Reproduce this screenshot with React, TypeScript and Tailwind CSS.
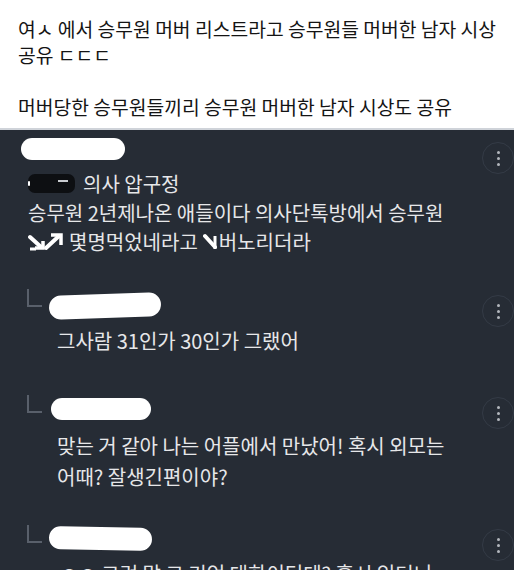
import React from "react";

const font = { fontFamily: '"Noto Sans CJK KR", "Noto Sans", sans-serif' };

function Kebab() {
  return (
    <div className="absolute right-0 w-[32px] h-[32px] rounded-full border border-[#343b46] flex flex-col items-center justify-center gap-[3px]">
      <span className="w-[3px] h-[3px] rounded-full bg-[#b3b7bd]" />
      <span className="w-[3px] h-[3px] rounded-full bg-[#b3b7bd]" />
      <span className="w-[3px] h-[3px] rounded-full bg-[#b3b7bd]" />
    </div>
  );
}

function Corner() {
  return <div className="w-[15px] h-[18px] border-l-2 border-b-2 border-[#59606b] shrink-0" />;
}

function Blob({ w, h }: { w: number; h: number }) {
  return <div className="bg-white rounded-full" style={{ width: w, height: h }} />;
}

export default function App() {
  return (
    <div className="w-[514px] h-[570px] overflow-hidden bg-[#262c35]" style={font}>
      <div className="bg-white px-[18px] pt-[16px] pb-[8px] border-b-2 border-[#cfd3d9] text-[19.3px] leading-[26px] text-[#141414]">
        <p className="whitespace-nowrap">여ㅅ 에서 승무원 머버 리스트라고 승무원들 머버한 남자 시상</p>
        <p>공유 ㄷㄷㄷ</p>
        <p>&nbsp;</p>
        <p>머버당한 승무원들끼리 승무원 머버한 남자 시상도 공유</p>
      </div>

      <div className="text-[#e6e7e9] text-[20px]">
        {/* comment 1 */}
        <div className="relative pt-[8px] pl-[21px]">
          <div className="absolute right-0 top-[12px] w-[32px] h-[32px]">
            <Kebab />
          </div>
          <Blob w={104} h={22} />
          <div className="mt-[9px] pl-[7px] leading-[29px]">
            <p className="flex items-center">
              <span className="relative inline-block w-[47px] h-[19px] bg-[#0d0f12] rounded-[7px] mr-[8px]">
                <span className="absolute left-0 top-[7px] w-[2px] h-[5px] bg-white rounded" />
                <span className="absolute left-[30px] top-[6px] w-[10px] h-[2px] bg-[#c9ccd0]" />
              </span>
              의사 압구정
            </p>
            <p className="whitespace-nowrap">승무원 2년제나온 애들이다 의사단톡방에서 승무원</p>
            <p className="flex items-center">
              <svg width="36" height="20" viewBox="0 0 36 20" className="mr-[5px]">
                <path d="M2 5 L13 15" stroke="white" strokeWidth="4" strokeLinecap="round" />
                <path d="M7 16 L15 16 L15 9" stroke="white" strokeWidth="3.5" fill="none" />
                <path d="M2 17 L8 17" stroke="white" strokeWidth="3" />
                <path d="M18 16 L31 4" stroke="white" strokeWidth="4" strokeLinecap="round" />
                <path d="M23 3 L33 3 L33 13" stroke="white" strokeWidth="3.5" fill="none" />
              </svg>
              몇명먹었네라고
              <svg width="16" height="20" viewBox="0 0 16 20" className="ml-[5px]">
                <path d="M2 4 L12 15" stroke="white" strokeWidth="4" strokeLinecap="round" />
                <path d="M12 4 L12 17" stroke="white" strokeWidth="3" />
              </svg>
              버노리더라
            </p>
          </div>
        </div>

        {/* reply 1 */}
        <div className="relative mt-[33px] pl-[27px]">
          <div className="absolute right-0 top-[6px] w-[32px] h-[32px]">
            <Kebab />
          </div>
          <div className="flex items-start gap-[7px]">
            <Corner />
            <div className="mt-[5px] -rotate-[2deg]">
              <Blob w={112} h={24} />
            </div>
          </div>
          <div className="mt-[8px] pl-[30px] leading-[30px]">
            <p>그사람 31인가 30인가 그랬어</p>
          </div>
        </div>

        {/* reply 2 */}
        <div className="relative mt-[39px] pl-[27px]">
          <div className="absolute right-0 top-[2px] w-[32px] h-[32px]">
            <Kebab />
          </div>
          <div className="flex items-start gap-[9px]">
            <Corner />
            <div className="mt-[3px]">
              <Blob w={100} h={22} />
            </div>
          </div>
          <div className="mt-[10px] pl-[30px] leading-[31px]">
            <p className="whitespace-nowrap">맞는 거 같아 나는 어플에서 만났어! 혹시 외모는</p>
            <p>어때? 잘생긴편이야?</p>
          </div>
        </div>

        {/* reply 3 */}
        <div className="relative mt-[33px] pl-[27px]">
          <div className="absolute right-0 top-[4px] w-[32px] h-[32px]">
            <Kebab />
          </div>
          <div className="flex items-start gap-[7px]">
            <Corner />
            <div className="mt-[2px] rotate-[1deg]">
              <Blob w={103} h={23} />
            </div>
          </div>
          <div className="mt-[9px] pl-[33px] leading-[30px]">
            <p className="whitespace-nowrap">ㅇㅇ 그런 말 그 기억 대화이던데? 혹시 있더니</p>
          </div>
        </div>
      </div>
    </div>
  );
}
